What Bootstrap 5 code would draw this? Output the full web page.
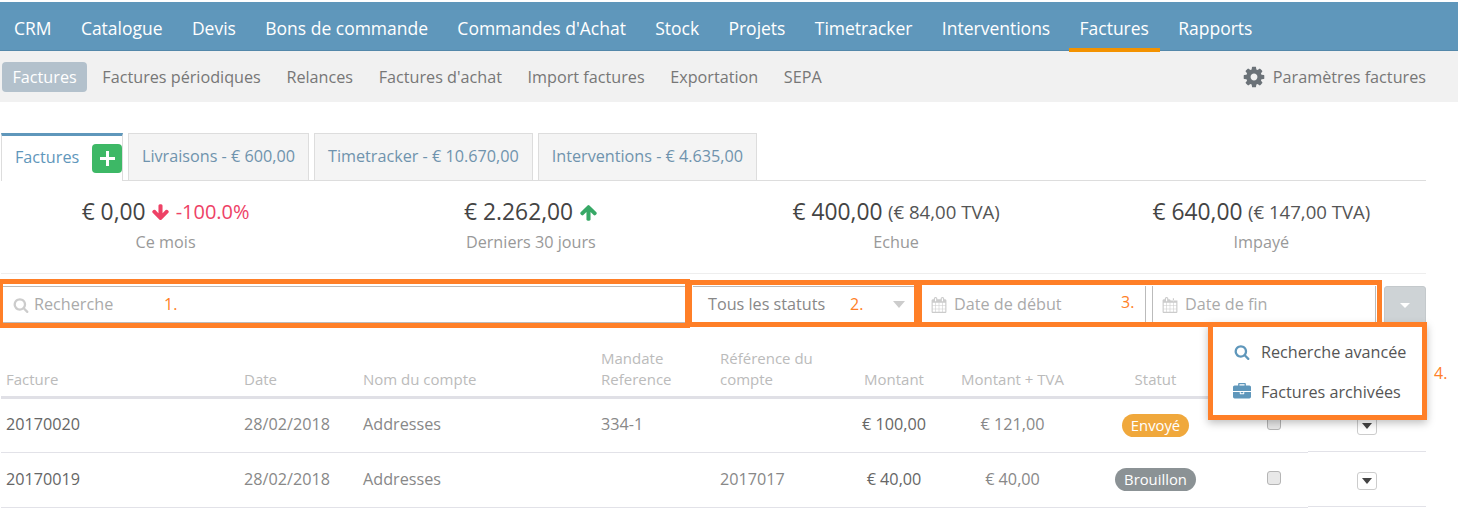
<!DOCTYPE html>
<html lang="fr">
<head>
<meta charset="utf-8">
<title>Factures</title>
<link href="https://cdn.jsdelivr.net/npm/bootstrap@5.3.0/dist/css/bootstrap.min.css" rel="stylesheet">
<style>
html,body{height:508px;overflow:hidden}
body{font-family:"Open Sans",sans-serif;font-size:16.2px;color:#555;background:#fff;position:relative}
svg.ico{fill:currentColor;display:inline-block;flex:none}
.topbar{margin-top:2px;height:49px;background:#5f97bb;border-bottom:1px solid #5488aa;padding-left:3px;gap:7.3px;position:relative;z-index:1}
.topbar .nav-link{color:#fff;font-size:17.5px;padding:0 11px;height:50px;line-height:52px;border-bottom:4px solid transparent}
.topbar .nav-link.active{border-bottom-color:#f39200}
.subbar{height:51px;background:#f1f1f1;padding:0 32px 0 2px;align-items:center}
.subbar .nav-link{color:#777;font-size:16.2px;padding:0 10.5px;height:30px;line-height:30px;border-radius:4px;margin-right:4.6px}
.subbar .nav-link.active{color:#fff;background:#b3c1cc}
.subbar .settings{margin:0;padding:0;display:flex;align-items:center;gap:6.5px}
.subbar .settings svg{color:#6b7278}
.page{margin:31px 32px 0 1px}
.tabbar{border-bottom:1px solid #ddd;height:48px;gap:5px;flex-wrap:nowrap}
.tabbar .nav-link{margin:0;height:47px;background:#f4f4f4;border:1px solid #ddd;border-bottom:0;border-radius:0;color:#6f93ad;font-size:16.2px;padding:0 13px;line-height:44px}
.tabbar .nav-link.active{background:#fff;border-top:3px solid #5f97bb;border-bottom:0;height:48px;color:#5f97bb;padding:0 0 3px 13px;line-height:40px;width:122px;display:flex;align-items:center;justify-content:space-between}
.addbtn{width:30px;height:29px;background:#3db866;border-radius:4px;display:flex;align-items:center;justify-content:center;color:#fff;margin-top:3px}
.stats{margin:0 -18px;height:92px;--bs-gutter-x:0}
.statrule{border-bottom:1px solid #eee}
.stats>div{text-align:center;padding-top:14px}
.amount{font-size:22.8px;line-height:34px;color:#444;display:flex;justify-content:center;align-items:center;gap:5.5px}
.amount small{font-size:18.6px;color:#555}
.amount .down{color:#ee4266;font-size:20px}
.caption{color:#999;font-size:16.2px;line-height:22px;margin-top:2px}
.filters{margin-top:12px;height:37px;position:relative}
.fieldbox{height:37px;border:0;border-top:1px solid #bbb;border-bottom:1px solid #bbb;display:flex;align-items:center;color:#aaa;font-size:16.2px;border-radius:0;background:#fff;padding:0}
.fsearch{width:685px;padding-left:12px;gap:5px}
.fsearch svg{color:#ccc}
.fstatus{margin-left:7px;width:222px;padding:0 10px 0 15px;color:#888;justify-content:space-between}
.fdate{border-top:0;border-bottom:0;border-right:1px solid #bbb;padding-left:10px;gap:7px}
.fdate svg{color:#ccc}
.fd1{margin-left:6px;width:225px}
.fd2{margin-left:6px;width:224px;border-left:1px solid #bbb;padding-left:9px}
.tri{width:0;height:0;border-left:6px solid transparent;border-right:6px solid transparent;border-top:7px solid #ccc}
.togglebtn{margin-left:8px;width:42px;height:38px;background:#ced3d6;border:1px solid #c4c9cc;border-radius:3px 3px 0 0;display:flex;align-items:center;justify-content:center;padding:0}
.togglebtn .tri{border-top-color:#fff;border-left-width:5px;border-right-width:5px;border-top-width:5px}
.menu4{display:block;position:absolute;left:1208px;top:323px;width:219px;height:97px;margin:0;padding:0;border:0;border-radius:0;background:#fff;box-shadow:0 3px 8px rgba(0,0,0,.25);z-index:3}
.menu4 a{display:flex;align-items:center;gap:10px;padding:0 0 0 25px;color:#555;font-size:16.2px;height:40px;background:none}
.menu4 a:first-child{margin-top:9px;gap:11px;padding-left:26px}
.menu4 svg{color:#5f97bb}
.listing{margin:25px 0 0;table-layout:fixed;width:1425px;--bs-table-border-color:#e2e2e8;--bs-table-color:#888}
.listing th{font-weight:400;color:#bbb;font-size:15px;line-height:21px;padding:0 0 6px 5px;vertical-align:bottom;border-bottom:3px solid #e0e0e6}
.listing td{padding:0 0 2px 5px;height:55px;vertical-align:middle;font-size:16.2px;color:#888;border-bottom:1px solid #e2e2e8}
.listing td:last-child{border-bottom-color:transparent;box-shadow:inset 0 -1px 0 #e2e2e8}
.listing .num{color:#666}
.listing .cen{text-align:center;padding-left:0}
.pillb{display:inline-block;font-weight:400;font-size:14.8px;line-height:23px;padding:0 9px;border-radius:12px;color:#fff;margin-top:2px}
.form-check-input.box{width:14px;height:14px;margin:0 0 6px;background:#e8e8e8;border:1px solid #b5b5b5;border-radius:3px;display:inline-block;vertical-align:middle}
.rowcaret{display:inline-flex;width:20px;height:18px;border:1px solid #ccc;border-radius:3px;align-items:center;justify-content:center;background:#fff;padding:0;margin-bottom:3px}
.rowcaret .tri{border-top-color:#444;border-left-width:5px;border-right-width:5px;border-top-width:6px}
.anno{position:absolute;border:5px solid #ff7f27;z-index:4;pointer-events:none}
.annonum{position:absolute;color:#ff7f27;font-size:16px;line-height:20px;z-index:5}
</style>
</head>
<body>
<nav class="nav topbar">
  <a class="nav-link" href="#">CRM</a>
  <a class="nav-link" href="#">Catalogue</a>
  <a class="nav-link" href="#">Devis</a>
  <a class="nav-link" href="#">Bons de commande</a>
  <a class="nav-link" href="#">Commandes d'Achat</a>
  <a class="nav-link" href="#">Stock</a>
  <a class="nav-link" href="#">Projets</a>
  <a class="nav-link" href="#">Timetracker</a>
  <a class="nav-link" href="#">Interventions</a>
  <a class="nav-link active" href="#">Factures</a>
  <a class="nav-link" href="#">Rapports</a>
</nav>
<nav class="nav subbar">
  <a class="nav-link active" href="#">Factures</a>
  <a class="nav-link" href="#">Factures périodiques</a>
  <a class="nav-link" href="#">Relances</a>
  <a class="nav-link" href="#">Factures d'achat</a>
  <a class="nav-link" href="#">Import factures</a>
  <a class="nav-link" href="#">Exportation</a>
  <a class="nav-link" href="#">SEPA</a>
  <a class="nav-link settings ms-auto" href="#"><svg class="ico" width="24" height="24" viewBox="0 0 1792 1792"><path d="M1152 896q0-106-75-181t-181-75-181 75-75 181 75 181 181 75 181-75 75-181zm512-109v222q0 12-8 23t-20 13l-185 28q-19 54-39 91 35 50 107 138 10 12 10 25t-9 23q-27 37-99 108t-94 71q-12 0-26-9l-138-108q-44 23-91 38-16 136-29 186-7 28-36 28h-222q-14 0-24.500-8.500t-11.500-21.500l-28-184q-49-16-90-37l-141 107q-10 9-25 9-14 0-25-11-126-114-165-168-7-10-7-23 0-12 8-23 15-21 51-66.500t54-70.500q-27-50-41-99l-183-27q-13-2-21-12.500t-8-23.500v-222q0-12 8-23t19-13l186-28q14-46 39-92-40-57-107-138-10-12-10-24 0-10 9-23 26-36 98.500-107.500t94.500-71.500q13 0 26 10l138 107q44-23 91-38 16-136 29-186 7-28 36-28h222q14 0 24.500 8.500t11.500 21.500l28 184q49 16 90 37l142-107q9-9 24-9 13 0 25 10 129 119 165 170 7 8 7 22 0 12-8 23-15 21-51 66.500t-54 70.500q26 50 41 98l183 28q13 2 21 12.500t8 23.500z"/></svg>Paramètres factures</a>
</nav>
<main class="page">
  <div class="nav tabbar">
    <a class="nav-link active" href="#">Factures<span class="addbtn"><svg width="17" height="17" viewBox="0 0 17 17"><path d="M7 1h3v6h6v3h-6v6H7v-6H1V7h6z" fill="#fff"/></svg></span></a>
    <a class="nav-link" href="#">Livraisons - € 600,00</a>
    <a class="nav-link" href="#">Timetracker - € 10.670,00</a>
    <a class="nav-link" href="#">Interventions - € 4.635,00</a>
  </div>
  <div class="statrule">
  <div class="row stats">
    <div class="col-3">
      <div class="amount">€ 0,00 <svg class="ico" style="color:#ee4266" width="19" height="19" viewBox="0 0 1792 1792"><path d="M1675 832q0 53-37 90l-651 652q-39 37-91 37-53 0-90-37l-651-652q-38-36-38-90 0-53 38-91l74-75q39-37 91-37 53 0 90 37l294 294v-704q0-52 38-90t90-38h128q52 0 90 38t38 90v704l294-294q37-37 90-37 52 0 91 37l75 75q37 39 37 91z"/></svg><span class="down">-100.0%</span></div>
      <div class="caption">Ce mois</div>
    </div>
    <div class="col-3">
      <div class="amount">€ 2.262,00 <svg class="ico" style="color:#37a866" width="19" height="19" viewBox="0 0 1792 1792"><path d="M1675 971q0 51-37 90l-75 75q-38 38-91 38-54 0-90-38l-294-293v704q0 52-37.500 84.500t-90.500 32.500h-128q-53 0-90.500-32.500t-37.500-84.500v-704l-294 293q-36 38-90 38t-90-38l-75-75q-38-38-38-90 0-53 38-91l651-651q35-37 90-37 54 0 91 37l651 651q37 39 37 91z"/></svg></div>
      <div class="caption">Derniers 30 jours</div>
    </div>
    <div class="col-3">
      <div class="amount">€ 400,00 <small>(€ 84,00 TVA)</small></div>
      <div class="caption">Echue</div>
    </div>
    <div class="col-3">
      <div class="amount">€ 640,00 <small>(€ 147,00 TVA)</small></div>
      <div class="caption">Impayé</div>
    </div>
  </div>
  </div>
  <div class="d-flex filters">
    <div class="fieldbox fsearch"><svg class="ico" width="16" height="16" viewBox="0 0 1792 1792"><path d="M1216 832q0-185-131.500-316.500t-316.500-131.500-316.500 131.500-131.500 316.500 131.500 316.500 316.500 131.500 316.500-131.500 131.500-316.500zm512 832q0 52-38 90t-90 38q-54 0-90-38l-343-342q-179 124-399 124-143 0-273.500-55.500t-225-150-150-225-55.500-273.500 55.500-273.500 150-225 225-150 273.500-55.500 273.500 55.500 225 150 150 225 55.500 273.500q0 220-124 399l343 343q37 37 37 90z"/></svg>Recherche</div>
    <div class="fieldbox fstatus">Tous les statuts<span class="tri"></span></div>
    <div class="fieldbox fdate fd1"><svg class="ico" width="16" height="16" viewBox="0 0 1792 1792"><path d="M192 1664h288v-288h-288v288zm352 0h320v-288h-320v288zm-352-352h288v-320h-288v320zm352 0h320v-320h-320v320zm-352-384h288v-288h-288v288zm736 736h320v-288h-320v288zm-384-736h320v-288h-320v288zm768 736h288v-288h-288v288zm-384-352h320v-320h-320v320zm-352-864v-288q0-13-9.500-22.500t-22.500-9.500h-64q-13 0-22.500 9.500t-9.500 22.500v288q0 13 9.500 22.500t22.500 9.500h64q13 0 22.500-9.500t9.500-22.500zm736 864h288v-320h-288v320zm-384-384h320v-288h-320v288zm384 0h288v-288h-288v288zm32-480v-288q0-13-9.500-22.500t-22.500-9.500h-64q-13 0-22.500 9.500t-9.500 22.500v288q0 13 9.500 22.500t22.500 9.500h64q13 0 22.500-9.500t9.500-22.500zm384-64v1280q0 52-38 90t-90 38h-1408q-52 0-90-38t-38-90v-1280q0-52 38-90t90-38h128v-96q0-66 47-113t113-47h64q66 0 113 47t47 113v96h384v-96q0-66 47-113t113-47h64q66 0 113 47t47 113v96h128q52 0 90 38t38 90z"/></svg>Date de début</div>
    <div class="fieldbox fdate fd2"><svg class="ico" width="16" height="16" viewBox="0 0 1792 1792"><path d="M192 1664h288v-288h-288v288zm352 0h320v-288h-320v288zm-352-352h288v-320h-288v320zm352 0h320v-320h-320v320zm-352-384h288v-288h-288v288zm736 736h320v-288h-320v288zm-384-736h320v-288h-320v288zm768 736h288v-288h-288v288zm-384-352h320v-320h-320v320zm-352-864v-288q0-13-9.500-22.500t-22.500-9.500h-64q-13 0-22.500 9.500t-9.500 22.500v288q0 13 9.500 22.500t22.500 9.500h64q13 0 22.500-9.500t9.500-22.500zm736 864h288v-320h-288v320zm-384-384h320v-288h-320v288zm384 0h288v-288h-288v288zm32-480v-288q0-13-9.500-22.500t-22.500-9.500h-64q-13 0-22.500 9.500t-9.500 22.500v288q0 13 9.500 22.500t22.500 9.500h64q13 0 22.500-9.500t9.500-22.500zm384-64v1280q0 52-38 90t-90 38h-1408q-52 0-90-38t-38-90v-1280q0-52 38-90t90-38h128v-96q0-66 47-113t113-47h64q66 0 113 47t47 113v96h128q52 0 90 38t38 90z"/></svg>Date de fin</div>
    <button class="togglebtn" type="button" aria-label="Options"><span class="tri"></span></button>
  </div>
  <table class="table listing">
    <colgroup><col style="width:238px"><col style="width:119px"><col style="width:238px"><col style="width:119px"><col style="width:119px"><col style="width:120px"><col style="width:117px"><col style="width:169px"><col style="width:68px"><col style="width:118px"></colgroup>
    <thead><tr>
      <th>Facture</th><th>Date</th><th>Nom du compte</th><th>Mandate Reference</th><th>Référence du compte</th><th class="cen">Montant</th><th class="cen">Montant + TVA</th><th class="cen">Statut</th><th></th><th></th>
    </tr></thead>
    <tbody>
      <tr><td class="num">20170020</td><td>28/02/2018</td><td>Addresses</td><td>334-1</td><td></td><td class="cen num">€ 100,00</td><td class="cen">€ 121,00</td><td class="cen"><span class="badge pillb" style="background:#f0a83c">Envoyé</span></td><td class="cen"><input class="form-check-input box" type="checkbox" aria-label="Choisir"></td><td class="cen"><button class="rowcaret" type="button" aria-label="Menu"><span class="tri"></span></button></td></tr>
      <tr><td class="num">20170019</td><td>28/02/2018</td><td>Addresses</td><td></td><td>2017017</td><td class="cen num">€ 40,00</td><td class="cen">€ 40,00</td><td class="cen"><span class="badge pillb" style="background:#8b9295">Brouillon</span></td><td class="cen"><input class="form-check-input box" type="checkbox" aria-label="Choisir"></td><td class="cen"><button class="rowcaret" type="button" aria-label="Menu"><span class="tri"></span></button></td></tr>
    </tbody>
  </table>
</main>
<div class="dropdown-menu menu4">
  <a class="dropdown-item" href="#"><svg class="ico" width="16" height="16" viewBox="0 0 1792 1792"><path d="M1216 832q0-185-131.500-316.500t-316.500-131.500-316.500 131.500-131.500 316.500 131.500 316.500 316.500 131.500 316.500-131.500 131.500-316.500zm512 832q0 52-38 90t-90 38q-54 0-90-38l-343-342q-179 124-399 124-143 0-273.500-55.500t-225-150-150-225-55.500-273.500 55.500-273.500 150-225 225-150 273.500-55.500 273.500 55.500 225 150 150 225 55.500 273.500q0 220-124 399l343 343q37 37 37 90z"/></svg>Recherche avancée</a>
  <a class="dropdown-item" href="#"><svg class="ico" width="18" height="18" viewBox="0 0 1792 1792"><path d="M640 256h512v-128h-512v128zm1152 640v480q0 66-47 113t-113 47h-1472q-66 0-113-47t-47-113v-480h672v160q0 26 19 45t45 19h320q26 0 45-19t19-45v-160h672zm-768 0v128h-256v-128h256zm768-480v384h-1792v-384q0-66 47-113t113-47h352v-160q0-40 28-68t68-28h576q40 0 68 28t28 68v160h352q66 0 113 47t47 113z"/></svg>Factures archivées</a>
</div>
<div class="anno" style="left:-2px;top:279px;width:692px;height:49px"></div>
<div class="anno" style="left:687px;top:280px;width:232px;height:47px"></div>
<div class="anno" style="left:917px;top:280px;width:465px;height:47px"></div>
<div class="anno" style="left:1208px;top:322px;width:219px;height:98px"></div>
<span class="annonum" style="left:164px;top:294px">1.</span>
<span class="annonum" style="left:850px;top:294px">2.</span>
<span class="annonum" style="left:1121px;top:292px">3.</span>
<span class="annonum" style="left:1434px;top:363px">4.</span>
</body>
</html>
